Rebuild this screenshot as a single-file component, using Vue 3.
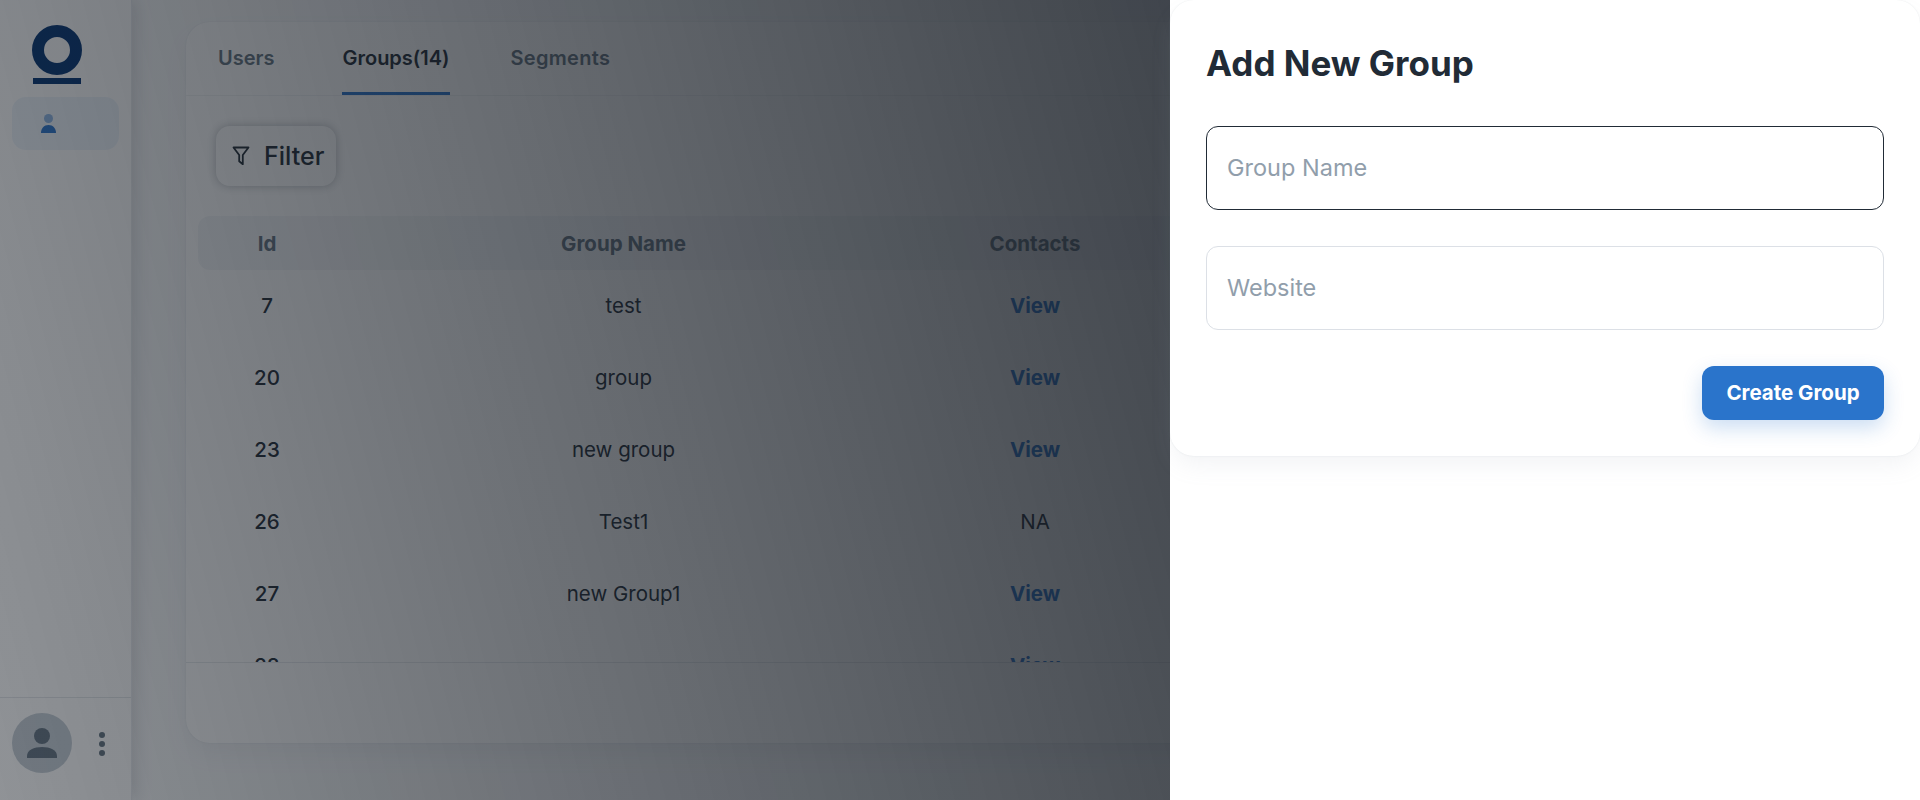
<script setup>
const rows = [
  { id: 7, name: 'test', contacts: 'View' },
  { id: 20, name: 'group', contacts: 'View' },
  { id: 23, name: 'new group', contacts: 'View' },
  { id: 26, name: 'Test1', contacts: 'NA' },
  { id: 27, name: 'new Group1', contacts: 'View' },
  { id: 28, name: '', contacts: 'View' },
]
</script>

<template>
  <div class="app">
    <aside class="sidebar">
      <div class="logo">
        <svg width="50" height="59" viewBox="0 0 50 59">
          <circle cx="25" cy="25" r="19" fill="none" stroke="#023272" stroke-width="12" />
          <rect x="1" y="53" width="48" height="6" fill="#023272" />
        </svg>
      </div>
      <div class="nav-item">
        <svg width="15" height="19" viewBox="0 0 15 19">
          <circle cx="7.5" cy="4.5" r="4.5" fill="#2a74cb" opacity=".5" />
          <path d="M0 19c0-4.500 3-8 7.500-8s7.500 3.500 7.500 8z" fill="#2a74cb" />
        </svg>
      </div>
      <div class="side-foot">
        <div class="avatar">
          <svg width="32" height="32" viewBox="0 0 32 32">
            <circle cx="16" cy="9" r="8" fill="#637381" />
            <path d="M1 31v-2c0-6 7-9 15-9s15 3 15 9v2z" fill="#637381" />
          </svg>
        </div>
        <div class="dots"><i></i><i></i><i></i></div>
      </div>
    </aside>

    <main class="main">
      <section class="card">
        <nav class="tabs">
          <span class="tab">Users</span>
          <span class="tab active">Groups(14)</span>
          <span class="tab last">Segments</span>
        </nav>
        <div class="toolbar">
          <button class="filter" type="button">
            <svg width="18" height="20" viewBox="0 0 18 20">
              <path d="M1.500 1.500h15l-5.700 7.500v9.200l-3.600-3v-6.200z" fill="none" stroke="#212b36" stroke-width="1.800" stroke-linejoin="round" />
            </svg>
            <span>Filter</span>
          </button>
        </div>
        <div class="table-wrap">
          <div class="thead row-grid">
            <span>Id</span><span>Group Name</span><span>Contacts</span>
          </div>
          <div class="tbody">
            <div v-for="r in rows" :key="r.id" class="tr row-grid">
              <span class="cid">{{ r.id }}</span>
              <span>{{ r.name }}</span>
              <span :class="{ link: r.contacts === 'View' }">{{ r.contacts }}</span>
            </div>
          </div>
        </div>
        <div class="card-foot"></div>
      </section>
    </main>

    <div class="backdrop"></div>

    <div class="drawer">
      <form class="panel" @submit.prevent>
        <h2>Add New Group</h2>
        <input class="field focused" type="text" placeholder="Group Name" />
        <input class="field" type="text" placeholder="Website" />
        <div class="actions">
          <button class="create" type="submit">Create Group</button>
        </div>
      </form>
    </div>
  </div>
</template>

<style>
html, body { margin: 0; background: #fff; }
</style>

<style scoped>
* { box-sizing: border-box; }
.app {
  display: flex;
  height: 800px;
  overflow: hidden;
  font-family: Inter, "Liberation Sans", sans-serif;
  color: #212b36;
  background: #f9fafb;
}
.sidebar {
  width: 132px;
  flex: none;
  display: flex;
  flex-direction: column;
  align-items: center;
  background: #fff;
  border-right: 1px solid #e8ebee;
  box-shadow: 4px 0 16px rgba(33, 43, 54, .14);
  z-index: 1;
}
.logo { height: 97px; padding-top: 25px; line-height: 0; align-self: flex-start; margin-left: 32px; }
.nav-item {
  width: 107px;
  height: 53px;
  margin-right: 1px;
  padding: 17px 0 0 29px;
  border-radius: 14px;
  background: rgba(42, 116, 203, .08);
  line-height: 0;
}
.side-foot {
  margin-top: auto;
  width: 100%;
  height: 103px;
  border-top: 1px solid #e3e6e9;
  padding: 15px 0 0 12px;
  display: flex;
  align-items: flex-start;
  gap: 27px;
}
.avatar {
  width: 60px;
  height: 60px;
  border-radius: 50%;
  background: #c4cdd5;
  display: flex;
  align-items: center;
  justify-content: center;
}
.dots { display: flex; flex-direction: column; gap: 3px; padding-top: 19px; }
.dots i { width: 6px; height: 6px; border-radius: 50%; background: #637381; }
.main { flex: 1; min-width: 0; padding: 22px 0 0 54px; }
.card {
  width: 1800px;
  height: 721px;
  display: flex;
  flex-direction: column;
  background: #fff;
  border-radius: 24px;
  box-shadow: 0 0 2px rgba(145, 158, 171, .2), 0 12px 24px -4px rgba(145, 158, 171, .12);
  overflow: hidden;
}
.tabs {
  height: 74px;
  flex: none;
  padding: 0 32px;
  display: flex;
  gap: 68px;
  border-bottom: 1px solid #f1f3f4;
}
.tab {
  height: 73px;
  padding-top: 23px;
  font-size: 20px;
  line-height: 26px;
  font-weight: 600;
  color: #637381;
}
.tab.active { color: #212b36; border-bottom: 3px solid #2a74cb; }
.tab.last { margin-left: -7px; letter-spacing: .3px; }
.toolbar { height: 120px; flex: none; padding: 30px 0 0 30px; }
.filter {
  width: 120px;
  height: 60px;
  display: flex;
  align-items: center;
  gap: 14px;
  padding: 0 0 0 16px;
  border: 0;
  border-radius: 14px;
  background: #fff;
  box-shadow: 0 0 10px rgba(33, 43, 54, .3);
  font: 500 25px Inter, "Liberation Sans", sans-serif;
  color: #212b36;
}
.table-wrap {
  height: 446px;
  flex: none;
  margin-left: 12px;
  overflow: hidden;
}
.row-grid {
  display: grid;
  grid-template-columns: 138px 575px 248px 1fr;
  text-align: center;
  align-items: center;
}
.thead {
  height: 54px;
  border-radius: 12px;
  background: #f4f6f8;
  font-size: 20.5px;
  font-weight: 700;
  color: #637381;
}
.tr { height: 72px; font-size: 20.5px; color: #212b36; padding-bottom: 1px; }
.cid { font-weight: 500; }
.link { color: #2a74cb; font-weight: 700; }
.card-foot { flex: 1; border-top: 1px solid #e6e9ec; }
.backdrop {
  position: fixed;
  inset: 0;
  z-index: 2;
  background: linear-gradient(75deg, rgba(22, 28, 36, .48) 0%, rgba(22, 28, 36, 1) 100%);
}
.drawer {
  position: fixed;
  top: 0;
  right: 0;
  bottom: 0;
  width: 750px;
  background: #fff;
  z-index: 3;
}
.panel {
  height: 456px;
  padding: 36px 36px 0 36px;
  display: flex;
  flex-direction: column;
  border-radius: 24px;
  background: #fff;
  box-shadow: 0 0 2px rgba(145, 158, 171, .2), 0 12px 24px -4px rgba(145, 158, 171, .12);
}
h2 {
  margin: 0 0 36px;
  font-size: 35px;
  line-height: 54px;
  font-weight: 700;
  color: #212b36;
}
.field {
  height: 84px;
  flex: none;
  margin-bottom: 36px;
  padding: 0 20px 2px;
  border: 1px solid #dce0e6;
  border-radius: 12px;
  outline: 0;
  background: #fff;
  font: 400 23.5px Inter, "Liberation Sans", sans-serif;
  color: #212b36;
}
.field::placeholder { color: #919eab; opacity: 1; }
.field.focused { border-color: #212b36; }
.actions { display: flex; justify-content: flex-end; }
.create {
  width: 182px;
  height: 54px;
  padding: 0 0 2px;
  border: 0;
  border-radius: 12px;
  background: #2a74cb;
  color: #fff;
  font: 700 20.5px Inter, "Liberation Sans", sans-serif;
  box-shadow: 0 8px 20px rgba(42, 116, 203, .24);
}
</style>
